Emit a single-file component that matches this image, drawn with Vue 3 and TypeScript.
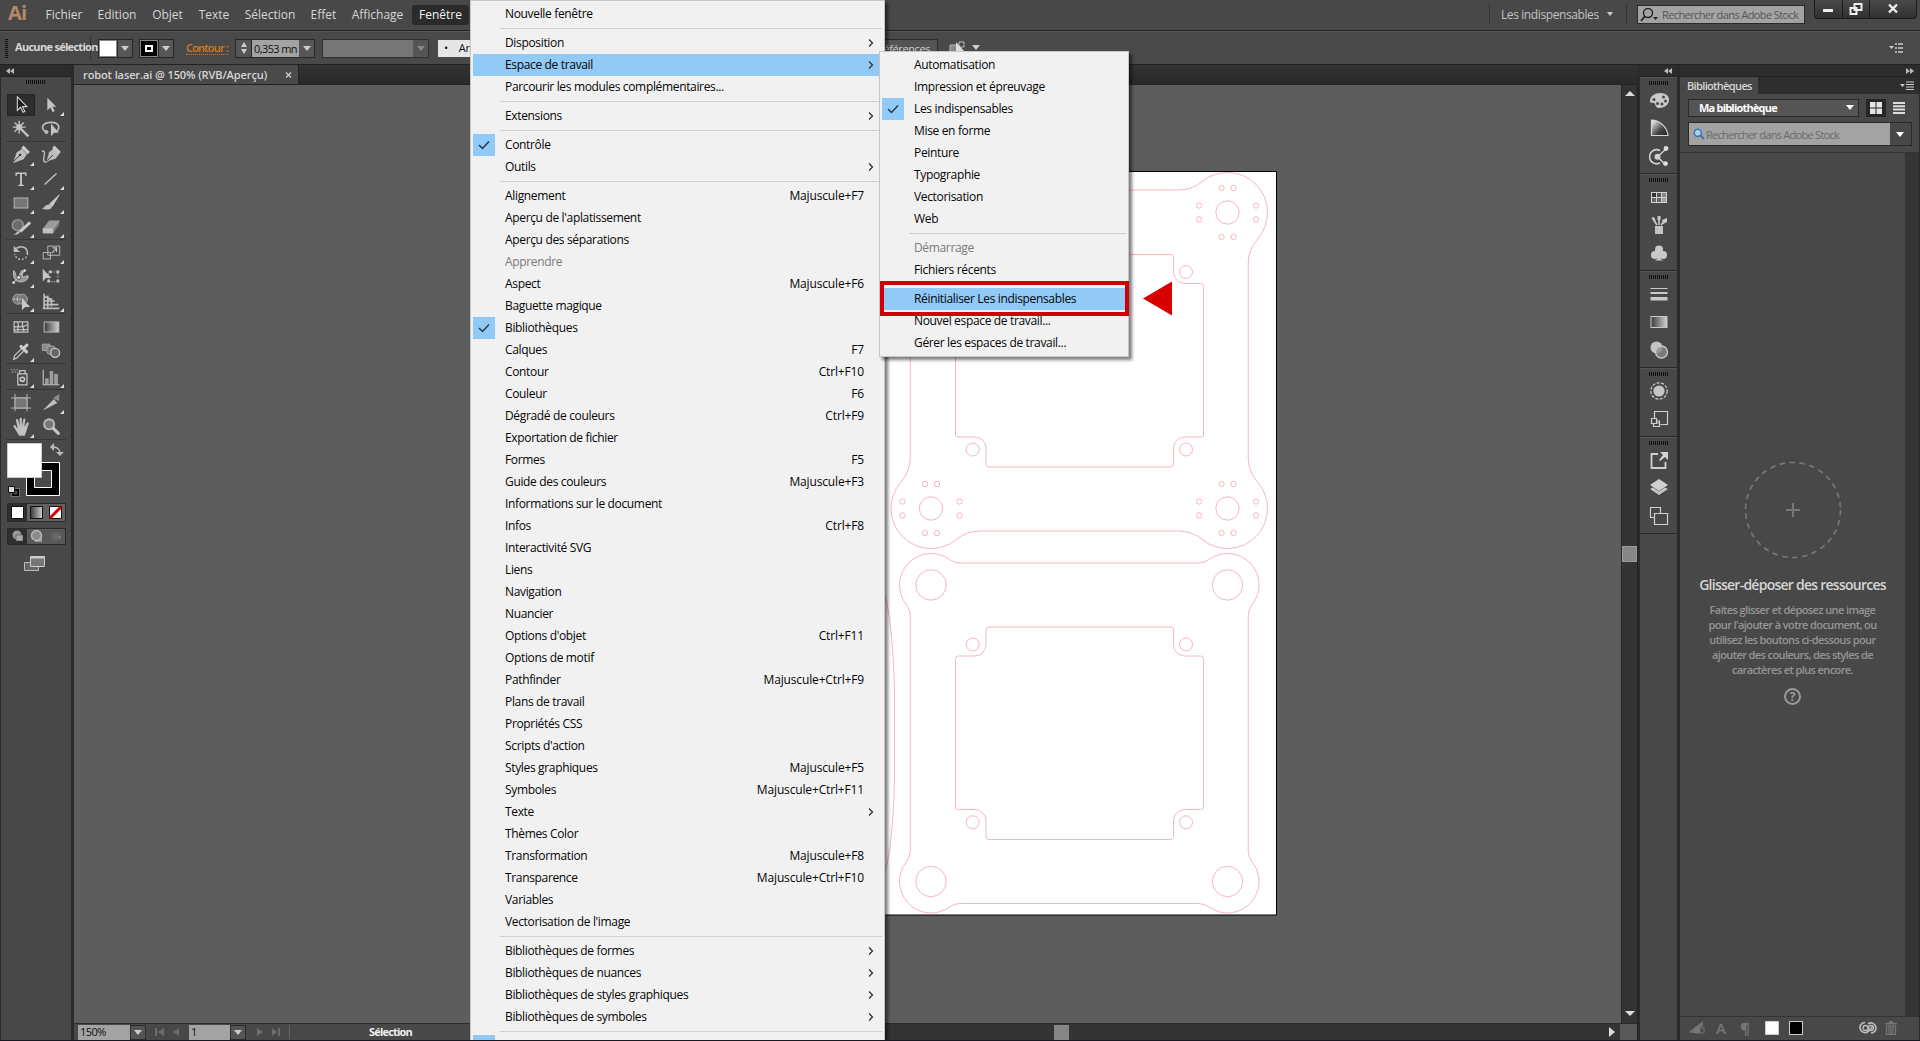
<script setup lang="ts">
interface MenuItem {
  label?: string
  key?: string
  sub?: boolean
  checked?: boolean
  active?: boolean
  disabled?: boolean
  sep?: boolean
}

const sep: MenuItem = { sep: true }
const item = (label: string, key = ''): MenuItem => ({ label, key })
const more = (label: string, active = false): MenuItem => ({ label, sub: true, active })

const menuBar = [
  { label: 'Fichier', w: 52 },
  { label: 'Edition', w: 54 },
  { label: 'Objet', w: 47 },
  { label: 'Texte', w: 46 },
  { label: 'Sélection', w: 66 },
  { label: 'Effet', w: 41 },
  { label: 'Affichage', w: 67 },
  { label: 'Fenêtre', w: 57, open: true },
]

const windowMenu: MenuItem[] = [
  item('Nouvelle fenêtre'), sep,
  more('Disposition'), more('Espace de travail', true), item('Parcourir les modules complémentaires...'), sep,
  more('Extensions'), sep,
  { label: 'Contrôle', checked: true }, more('Outils'), sep,
  item('Alignement', 'Majuscule+F7'),
  item("Aperçu de l'aplatissement"),
  item('Aperçu des séparations'),
  { label: 'Apprendre', disabled: true },
  item('Aspect', 'Majuscule+F6'),
  item('Baguette magique'),
  { label: 'Bibliothèques', checked: true },
  item('Calques', 'F7'),
  item('Contour', 'Ctrl+F10'),
  item('Couleur', 'F6'),
  item('Dégradé de couleurs', 'Ctrl+F9'),
  item('Exportation de fichier'),
  item('Formes', 'F5'),
  item('Guide des couleurs', 'Majuscule+F3'),
  item('Informations sur le document'),
  item('Infos', 'Ctrl+F8'),
  item('Interactivité SVG'),
  item('Liens'),
  item('Navigation'),
  item('Nuancier'),
  item("Options d'objet", 'Ctrl+F11'),
  item('Options de motif'),
  item('Pathfinder', 'Majuscule+Ctrl+F9'),
  item('Plans de travail'),
  item('Propriétés CSS'),
  item("Scripts d'action"),
  item('Styles graphiques', 'Majuscule+F5'),
  item('Symboles', 'Majuscule+Ctrl+F11'),
  more('Texte'),
  item('Thèmes Color'),
  item('Transformation', 'Majuscule+F8'),
  item('Transparence', 'Majuscule+Ctrl+F10'),
  item('Variables'),
  item("Vectorisation de l'image"), sep,
  more('Bibliothèques de formes'),
  more('Bibliothèques de nuances'),
  more('Bibliothèques de styles graphiques'),
  more('Bibliothèques de symboles'), sep,
  { label: '', checked: true },
]

const workspaceMenu: MenuItem[] = [
  item('Automatisation'),
  item('Impression et épreuvage'),
  { label: 'Les indispensables', checked: true },
  item('Mise en forme'),
  item('Peinture'),
  item('Typographie'),
  item('Vectorisation'),
  item('Web'), sep,
  { label: 'Démarrage', disabled: true },
  item('Fichiers récents'), sep,
  { label: 'Réinitialiser Les indispensables', active: true },
  item('Nouvel espace de travail...'),
  item('Gérer les espaces de travail...'),
]

// Toolbar glyphs, drawn on a 24 x 24 grid.
const g = 'fill="none" stroke="#bdbdbd"'
const tools: Record<string, string> = {
  select: '<path d="M8 3v15l3.600-3.500 2.600 5.500 2-1-2.500-5.200h4.800z" fill="#1d1d1d" stroke="#d0d0d0" stroke-width="1.200"/>',
  direct: '<path d="M8 4v14l3.300-3.200 2.600 5 2.300-1.200-2.600-4.800h4.200z" fill="#c4c4c4"/>',
  wand: '<path d="M12 12l8 8" stroke="#c4c4c4" stroke-width="2.600"/><path d="M10 3v14M3 10h14M5 5l10 10M15 5L5 15" stroke="#c4c4c4" stroke-width="1.500"/><circle cx="10" cy="10" r="3.200" fill="#c4c4c4"/>',
  lasso: '<path d="M9 15c-5 0-7-3-6-6 2-5 14-6 17-1 1 2.500 0 5-2 6.500M7 14c-3 1 0 4 1 2s-1-2-2-1" fill="none" stroke="#c0c0c0" stroke-width="1.800"/><path d="M12 6v14l3.500-4h5z" fill="#c4c4c4"/>',
  pen: '<path d="M3 20l4-11 6-4 6 6-4 6-11 4z" fill="#bdbdbd" stroke="#333" stroke-width=".6"/><path d="M3 20l7-7" stroke="#333"/><circle cx="11" cy="12" r="1.300" fill="#333"/><path d="M13.500 3l7 7" stroke="#c8c8c8" stroke-width="3.500"/>',
  curve: '<path d="M2 8c5-2 2 6 2 9 0 4 3 3 5 1" fill="none" stroke="#bdbdbd" stroke-width="1.500"/><path d="M7 19l3-10 5-4 6 6-4 5z" fill="#bdbdbd"/><path d="M7 19l7-7" stroke="#333"/><path d="M14.500 3l7 7" stroke="#c8c8c8" stroke-width="3.500"/>',
  text: '<path d="M6 5h12v4h-1l-1-2.500h-3V18l2 .5v1H9v-1l2-.5V6.500H8L7 9H6z" fill="#c6c6c6"/>',
  line: '<path d="M5 18L18 6" stroke="#c6c6c6" stroke-width="1.400"/>',
  rect: '<rect x="4.500" y="6.500" width="15" height="11" fill="#777" stroke="#bdbdbd"/>',
  brush: '<path d="M21 3L10.500 13l3 2.500z" fill="#c8c8c8" stroke="#c8c8c8"/><path d="M10 13.500c2 0 3.500 1.500 3 3-1 3-7 3-11 1.500 3-.5 3-4.500 8-4.500z" fill="#bdbdbd"/>',
  blob: '<circle cx="8.500" cy="10" r="6" fill="#6c6c6c" stroke="#999" stroke-width="1.500"/><path d="M11 17L22 7" stroke="#c8c8c8" stroke-width="3.200"/><path d="M3 20c5 0 4-5 8-3-1 3-4 4-8 3z" fill="#c4c4c4"/>',
  eraser: '<path d="M3 14l7-9h11l-7 9z" fill="#9a9a9a"/><path d="M3 14h11v5H3z" fill="#c0c0c0"/><path d="M14 14l7-9v5l-7 9z" fill="#777"/><path d="M3 14h11v5M14 14l7-9" fill="none" stroke="#ddd" stroke-width=".7"/>',
  rotate: `<path d="M7 7c5-4 12-1 12 5" ${g} stroke-width="1.700"/><path d="M4 4v7h7z" fill="#bdbdbd"/><path d="M19 12c0 5-4 7-7 7s-6-2-7-6" ${g} stroke-width="1.700" stroke-dasharray="2 2"/>`,
  scale: `<path d="M8.500 4.500h13v10h-13z" ${g}/><path d="M3.500 11.500h8v7h-8z" ${g}/><path d="M13 12l5-5M13.500 6.500H18V11" ${g} stroke-width="1.300"/>`,
  warp: '<path d="M4 5c3 2 1 6 4 7 3 0 3-8 6-7 1 4-2 5 0 7 3 0 3-2 6-1-1 6-6 7-11 6-3-1-6-4-5-12z" fill="#9a9a9a" stroke="#c4c4c4"/><path d="M4 18L16 5" stroke="#ccc"/><circle cx="9.500" cy="12.500" r="2" fill="#fff" stroke="#333"/><circle cx="4" cy="18" r="1.500" fill="#ddd"/><circle cx="16" cy="5" r="1.500" fill="#ddd"/>',
  transform: '<path d="M3 3v14l3.500-4h6z" fill="#c4c4c4"/><path d="M9 6.500h10.500V17H9z" fill="none" stroke="#c4c4c4" stroke-dasharray="1.500 1.500"/><path d="M18 5h3v3h-3zM18 15h3v3h-3zM8 15h3v3H8zM10 5h3v3h-3z" fill="#c4c4c4"/>',
  builder: '<circle cx="8.500" cy="10" r="5.500" fill="#777" stroke="#aaa"/><circle cx="13.500" cy="10" r="5.500" fill="#777" stroke="#aaa"/><path d="M4 10h12" stroke="#fff" stroke-dasharray="1.500 1.500"/><path d="M13 9v13l3.500-3.500H22z" fill="#c8c8c8"/>',
  perspective: '<path d="M4.500 4v16M8.500 6v14M12.500 9v9M3 20h18M5 16h15M5 12h11M5 7l7 3" fill="none" stroke="#bdbdbd" stroke-width="1.800"/>',
  mesh: '<path d="M4.500 6.500h15v11h-15zM4 13c4-4 7 2 16-4M4 16c5-3 10 1 16-2M8 7c4 4-2 6 1 11M14 7c-3 5 3 6 1 11" fill="none" stroke="#c4c4c4" stroke-width="1.300"/>',
  gradient: '<rect x="4.500" y="6.500" width="16" height="11" fill="url(#grad)" stroke="#c4c4c4"/>',
  dropper: '<path d="M4 21l1-4 8-8 2.500 2.500-8 8z" fill="none" stroke="#c4c4c4" stroke-width="1.300"/><path d="M12 7l6 6M15 9l3.500-3.500" stroke="#ccc" stroke-width="3.400" stroke-linecap="round"/>',
  blend: '<path d="M2.500 4.500h8v7h-8z" fill="#888" stroke="#aaa"/><rect x="7.500" y="6.500" width="9" height="9" rx="3" fill="#777" stroke="#aaa"/><circle cx="16.500" cy="14" r="4.900" fill="#666" stroke="#c4c4c4" stroke-width="1.500"/>',
  spray: '<path d="M8.500 8.500h10v12h-10zM10.500 8V5h6v3" fill="none" stroke="#c4c4c4" stroke-width="1.400"/><circle cx="13.500" cy="14.500" r="2.300" fill="none" stroke="#ccc" stroke-width="1.700"/><path d="M1 4h9M2 6.500h7" stroke="#bbb" stroke-dasharray="1.500 1.500"/>',
  graph: '<path d="M3.500 4v16.500H21" fill="none" stroke="#c4c4c4" stroke-width="1.200"/><path d="M6 14h3v6H6zM11 6h3v14h-3zM16 9h3v11h-3z" fill="#9a9a9a" stroke="#bbb" stroke-width=".6"/>',
  artboard: '<path d="M5.500 2v19M18.500 2v19M1 6.500h22M1 17.500h22" stroke="#bdbdbd"/><path d="M5.500 6.500h13v11h-13z" fill="#777" stroke="#bdbdbd"/>',
  slice: '<path d="M3 20L15 8l4 4c-5 2-8 5-16 8z" fill="#bdbdbd"/><path d="M14 7l7-5v8z" fill="#8a8a8a"/>',
  hand: '<path d="M3.500 11c1-2 2.500-1 3.500 1l1.500 1.500L6.500 5c0-2 2-2.500 2.600 0l1.400 6V3.500c0-2 2.300-2 2.500 0V11l1.500-7c.3-2 2.500-1.500 2.200.3L15.700 12l2.500-4.500c1-1.500 2.800-.5 2.200 1L17 19l-1 2.500h-6z" fill="#c0c0c0"/>',
  zoom: '<circle cx="10" cy="9" r="5.500" fill="#777" stroke="#bdbdbd" stroke-width="2"/><path d="M14.500 13.500l5.500 5.500" stroke="#c4c4c4" stroke-width="3.400" stroke-linecap="round"/>',
}

const toolGroups: string[][] = [
  ['select', 'direct', 'wand', 'lasso'],
  ['pen', 'curve', 'text', 'line', 'rect', 'brush', 'blob', 'eraser'],
  ['rotate', 'scale', 'warp', 'transform', 'builder', 'perspective'],
  ['mesh', 'gradient', 'dropper', 'blend'],
  ['spray', 'graph'],
  ['artboard', 'slice', 'hand', 'zoom'],
]
const noFlyout = ['select', 'wand', 'lasso', 'curve', 'transform', 'mesh', 'gradient', 'blend', 'artboard', 'zoom']

// Collapsed panel dock, 20 x 20 grid.
const d = 'fill="none" stroke="#cfcfcf"'
const docks: string[][] = [
  [
    '<path d="M1 11c0-5 5-8 10-8 6 0 9 3 9 7 0 5-5 8-10 8-4 0-3-4-5-5s-4 1-4-2z" fill="#c9c9c9"/><g fill="#484848"><circle cx="5" cy="9.500" r="1.500"/><circle cx="8.500" cy="13.500" r="1.500"/><circle cx="13" cy="14" r="1.500"/><circle cx="16.500" cy="11" r="1.500"/><circle cx="14.500" cy="7" r="1.500"/></g>',
    '<path d="M2.500 2v15.500H19C18 9 11 2 2.500 2z" fill="url(#fan)" stroke="#d5d5d5" stroke-width="1.200"/>',
    `<path d="M11 4.600A7 7 0 1 0 11 16.800" ${d} stroke-width="1.700"/><circle cx="8.500" cy="10.700" r="3" fill="#cfcfcf"/><path d="M8.500 10.700L17 3M8.500 10.700l8 8" stroke="#cfcfcf" stroke-width="1.500"/><circle cx="17" cy="2.500" r="2.400" fill="#ddd"/><circle cx="16.500" cy="17.600" r="2.400" fill="#ddd"/>`,
  ],
  [
    '<path d="M2 5h16v11H2z" fill="#d0d0d0"/><path d="M3 6h4v4H3z" fill="#333"/><path d="M8 6h4v4H8z" fill="#555"/><path d="M13 6h4v4h-4z" fill="#888"/><path d="M3 11h4v4H3zM8 11h4v4H8z" fill="#666"/><path d="M13 11h4v4h-4z" fill="#a0a0a0"/>',
    '<path d="M6 11h8v8H6z" fill="#c4c4c4"/><path d="M8 10L4 4M10 10V2M12 10l4-5" stroke="#ccc" stroke-width="1.600"/><path d="M2 3l3-1 2 4zM8.500 1h3v4h-3zM13 5l5-2v4l-4 2z" fill="#c9c9c9"/>',
    '<circle cx="10" cy="6.500" r="4" fill="#c9c9c9"/><circle cx="6" cy="12" r="4" fill="#c9c9c9"/><circle cx="14" cy="12" r="4" fill="#c9c9c9"/><path d="M9 9h2l.5 7 3 1.500h-9L8.500 16z" fill="#c9c9c9"/>',
  ],
  [
    '<path d="M1.500 4h17v1h-17zM1.500 8h17v2h-17zM1.500 13h17v3.500h-17z" fill="#c9c9c9"/>',
    '<rect x="2" y="4.500" width="16" height="11" fill="url(#grad)" stroke="#c9c9c9"/>',
    '<circle cx="7.500" cy="7.500" r="6" fill="#c4c4c4"/><circle cx="12.500" cy="12" r="6" fill="#8b8b8b" fill-opacity=".75" stroke="#c9c9c9" stroke-width="1.300"/>',
  ],
  [
    `<circle cx="10" cy="10" r="5.600" fill="#c4c4c4"/><circle cx="10" cy="10" r="8.200" ${d} stroke-width="1.200" stroke-dasharray="3 1.500"/>`,
    `<path d="M5.500 9V2.500h13v13h-7M2.500 9.500h5v5h-5zM8 14h3M4.500 15v2.500h6V12H8" ${d} stroke-width="1.200"/>`,
  ],
  [
    `<path d="M9 4H2.500v14h14v-6" ${d} stroke-width="1.800"/><path d="M11 2h8v8l-3-3-5 4-1-1 4-5z" fill="#d4d4d4"/>`,
    '<path d="M10 1l9 6-9 6-9-6z" fill="#d0d0d0"/><path d="M1 11l3-1.500 6 4 6-4 3 1.500-9 6z" fill="#c4c4c4"/>',
    `<path d="M5 11.500H1.500v-10h10V7" ${d} stroke-width="1.200"/><path d="M5.500 7.500h13v11h-13z" ${d} stroke-width="1.200"/>`,
  ],
]

// Outline of a plate: four round lobes joined by straight edges through tangent fillets.
function plate(x1: number, x2: number, y1: number, y2: number, r: number, ox: number, oy: number, f: number): string {
  const dx = Math.sqrt((r + f) ** 2 - (f + oy) ** 2)
  const dy = Math.sqrt((r + f) ** 2 - (f + ox) ** 2)
  const k = r / (r + f)
  const hx = dx * k
  const hy = (f + oy) * k
  const vx = (f + ox) * k
  const vy = dy * k
  const n = (v: number) => v.toFixed(2)
  const fillet = (x: number, y: number) => `A${f} ${f} 0 0 0 ${n(x)} ${n(y)}`
  const lobe = (x: number, y: number) => `A${r} ${r} 0 0 1 ${n(x)} ${n(y)}`
  return [
    `M${n(x1 + dx)} ${n(y1 - oy)}H${n(x2 - dx)}`,
    fillet(x2 - hx, y1 - hy), lobe(x2 + vx, y1 + vy), fillet(x2 + ox, y1 + dy), `V${n(y2 - dy)}`,
    fillet(x2 + vx, y2 - vy), lobe(x2 - hx, y2 + hy), fillet(x2 - dx, y2 + oy), `H${n(x1 + dx)}`,
    fillet(x1 + hx, y2 + hy), lobe(x1 - vx, y2 - vy), fillet(x1 - ox, y2 - dy), `V${n(y1 + dy)}`,
    fillet(x1 - vx, y1 + vy), lobe(x1 + hx, y1 - hy), fillet(x1 + dx, y1 - oy), 'Z',
  ].join('')
}

// Cut-out window with notched corners; t = top edge.
function cutout(t: number): string {
  const b = t + 212.5
  return `M989 ${t}H1170.500q3 0 3 3V${t + 18}q1 10 11 11H1200.500q3 0 3 3V${b - 32}q0 2-3 2H1184.500q-10 1-11 11V${b - 3}q0 3-3 3H989q-3 0-3-3V${b - 19}q-1-10-11-11H958.500q-3 0-3-2V${t + 32}q0-3 3-3H975q10-1 11-11V${t + 3}q0-3 3-3Z`
}

const lobesX = [931, 1227.5]
const smallHoles = [
  [-6, -24.5], [6, -24.5], [-6, 24.5], [6, 24.5],
  [-28.5, -7], [-28.5, 7], [28.5, -7], [28.5, 7],
]
</script>

<template>
  <div class="app">
    <svg class="defs" width="0" height="0">
      <linearGradient id="grad"><stop offset="0" stop-color="#3a3a3a" /><stop offset="1" stop-color="#d0d0d0" /></linearGradient>
      <linearGradient id="fan" x2="1" y2="1"><stop offset="0" stop-color="#fff" /><stop offset=".6" stop-color="#444" /><stop offset="1" stop-color="#222" /></linearGradient>
    </svg>

    <header class="menubar">
      <span class="brand">Ai</span>
      <nav>
        <span v-for="m in menuBar" :key="m.label" class="mi" :class="{ open: m.open }" :style="{ width: m.w + 'px' }">{{ m.label }}</span>
      </nav>
      <div class="right">
        <div class="workspace"><span>Les indispensables</span><i class="tri" /></div>
        <div class="stock">
          <svg width="20" height="16" viewBox="0 0 20 16"><circle cx="9" cy="6" r="4.500" fill="none" stroke="#222" stroke-width="1.400" /><path d="M6 9l-4 5" stroke="#222" stroke-width="1.800" /><path d="M14 10h5l-2.500 3z" fill="#222" /></svg>
          <span>Rechercher dans Adobe Stock</span>
        </div>
        <div class="winbtns">
          <span><svg width="12" height="12"><path d="M1 6h10v3H1z" fill="#eee" /></svg></span>
          <span><svg width="14" height="14"><path d="M5.500 2h7v6h-7z M1.500 6h6v6h-6z" fill="#333" stroke="#eee" stroke-width="2" /></svg></span>
          <span class="close"><svg width="12" height="12"><path d="M2 1.500l8 8M10 1.500l-8 8" stroke="#eee" stroke-width="2.400" /></svg></span>
        </div>
      </div>
    </header>

    <div class="control">
      <i class="vgrip" />
      <b class="nosel">Aucune sélection</b>
      <div class="swatch"><i class="white" /><em><i class="tri" /></em></div>
      <div class="swatch stroke"><i class="ring"><i /></i><em><i class="tri" /></em></div>
      <span class="contour">Contour :</span>
      <div class="weight">
        <span class="spin"><i class="tri up" /><i class="tri" /></span>
        <span class="val">0,353 mn</span><em><i class="tri" /></em>
      </div>
      <div class="profile"><span /><em><i class="tri" /></em></div>
      <div class="shape">•<span>Arrondi</span></div>
      <div class="prefs">Préférences</div>
      <svg class="simil" width="32" height="18"><path d="M1 6h7v7H1z" fill="#888" stroke="#bbb" /><path d="M10 3h5v5h-5z" fill="none" stroke="#bbb" /><path d="M7 3v12l3-3h5z" fill="#ddd" /><path d="M23 6h8l-4 5z" fill="#ccc" /></svg>
      <svg class="opts" width="16" height="12"><path d="M0 4h5L2.500 7z" fill="#ccc" /><path d="M6 2h2M6 6h2M6 10h2M9 2h5M9 6h5M9 10h5" stroke="#ccc" stroke-width="1.500" /></svg>
    </div>

    <main>
      <aside class="toolbar">
        <div class="collapse"><svg width="8" height="6"><path d="M4 0v6L0 3zM8 0v6L4 3z" fill="#bbb" /></svg></div>
        <i class="grip" />
        <div v-for="(grp, i) in toolGroups" :key="i" class="tgroup">
          <div v-for="t in grp" :key="t" class="tool" :class="{ on: t === 'select', fly: !noFlyout.includes(t) }">
            <svg width="22" height="22" viewBox="0 0 24 24" v-html="tools[t]" />
          </div>
        </div>
        <svg class="fillstroke" width="64" height="56" viewBox="0 0 64 56">
          <path d="M20.500 20.500h33v33h-33z" fill="#000" stroke="#fff" /><path d="M28.500 28.500h17v17h-17z" fill="#4a4a4a" stroke="#fff" />
          <path d="M1.500 1.500h34v34h-34z" fill="#fff" stroke="#ccc" />
          <path d="M47 5c5 0 7 2 7 7" fill="none" stroke="#bbb" stroke-width="1.300" /><path d="M48 1v8l-4-4zM50 10h8l-4 4z" fill="#bbb" />
          <path d="M6.500 47.500h6v6h-6z" fill="none" stroke="#000" stroke-width="2" /><path d="M5.500 46.500h8v8h-8z" fill="none" stroke="#aaa" stroke-width=".6" /><path d="M2.500 44.500h6v6h-6z" fill="#ddd" stroke="#111" />
        </svg>
        <svg class="modes" width="60" height="44" viewBox="0 0 60 44">
          <path d="M.5.500h58v18H.5z" fill="#626262" stroke="#2b2b2b" /><path d="M1 1h19v17H1z" fill="#2e2e2e" />
          <path d="M4.500 3.500h12v12h-12z" fill="#fff" stroke="#111" /><path d="M23.500 3.500h12v12h-12z" fill="url(#grad)" stroke="#111" /><path d="M42.500 3.500h12v12h-12z" fill="#fff" stroke="#111" /><path d="M43 15L54 4" stroke="#d50000" stroke-width="3" />
          <path d="M.5 25.500h58v16H.5z" fill="#585858" stroke="#2b2b2b" /><path d="M1 26h19v15H1z" fill="#2e2e2e" />
          <circle cx="10" cy="32" r="4.500" fill="#999" /><path d="M9 32h7v6H9z" fill="#aaa" stroke="#333" stroke-width=".5" />
          <path d="M28 33h7v6h-7z" fill="#999" /><circle cx="29.500" cy="32.500" r="5" fill="#8a8a8a" stroke="#bbb" stroke-width="1.300" />
          <circle cx="49" cy="33.500" r="4.500" fill="#666" /><path d="M49 33h5v4z" fill="#777" />
        </svg>
        <svg class="screens" width="22" height="17"><path d="M.5 7.500h14v8H.5z" fill="#666" stroke="#bbb" /><path d="M6.500 1.500h14v10h-14z" fill="#777" stroke="#ccc" /><path d="M7 2h13v1.500H7z" fill="#ccc" /></svg>
      </aside>

      <section class="document">
        <div class="tabs"><div class="tab"><span>robot laser.ai @ 150% (RVB/Aperçu)</span><svg width="7" height="8"><path d="M1 1.500l5 5M6 1.500l-5 5" stroke="#ccc" stroke-width="1.400" /></svg></div></div>
        <div class="viewport">
          <div class="stage">
            <svg class="canvas" width="1547" height="938" viewBox="74 85 1547 938">
              <path d="M800 171.500h476.500v743.500H800z" fill="#fff" stroke="#000" />
              <g fill="none" stroke="#f3b9bd">
                <path :d="plate(931, 1227.5, 212.5, 508.5, 40, 20.7, 22.5, 38)" />
                <path :d="plate(931, 1227.5, 585, 881.5, 31.5, 20.7, 22, 18)" />
                <path :d="cutout(254.5)" />
                <path :d="cutout(627)" />
                <template v-for="x in lobesX" :key="x">
                  <circle v-for="y in [585, 881.5]" :key="y" :cx="x" :cy="y" r="15.200" />
                  <template v-for="y in [212.5, 508.5]" :key="'h' + y">
                    <circle :cx="x" :cy="y" r="11.700" />
                    <circle v-for="(h, i) in smallHoles" :key="i" :cx="x + h[0]" :cy="y + h[1]" r="2.700" />
                  </template>
                </template>
                <template v-for="x in [972.7, 1186]" :key="'s' + x">
                  <circle v-for="y in [272, 449.500, 644.500, 822.300]" :key="y" :cx="x" :cy="y" r="6.500" />
                </template>
                <path d="M884 594C890 606 894.500 660 894.500 700V770C894.500 812 890 862 884 873" />
              </g>
              <path d="M1143 298.500l29-17v34z" fill="#d90000" />
            </svg>
            <div class="vscroll"><i class="tri up big" /><i class="thumb" /><i class="tri big" /></div>
          </div>
          <div class="status">
            <span class="field zoomf">150%</span><em><i class="tri" /></em>
            <svg width="43" height="12"><path d="M9 2h2v8H9zM18 2v8l-6-4zM33 2v8l-6-4z" fill="#6c6c6c" /></svg>
            <span class="field page">1</span><em><i class="tri" /></em>
            <svg width="43" height="12"><path d="M11 2v8l6-4zM26 2v8l5-4zM32 2h2v8h-2z" fill="#6c6c6c" /></svg>
            <b class="mode">Sélection</b>
            <div class="hscroll"><i class="hthumb" /><i class="arrow" /></div>
            <i class="corner" />
          </div>
        </div>
      </section>

      <aside class="dock">
        <div class="collapse end"><svg width="8" height="6"><path d="M4 0v6L0 3zM8 0v6L4 3z" fill="#bbb" /></svg></div>
        <div v-for="(grp, i) in docks" :key="i" class="dgroup">
          <i class="grip" />
          <span v-for="(ic, j) in grp" :key="j"><svg width="20" height="20" viewBox="0 0 20 20" v-html="ic" /></span>
        </div>
      </aside>

      <aside class="libs">
        <div class="collapse end"><svg width="8" height="6"><path d="M0 0v6l4-3zM4 0v6l4-3z" fill="#bbb" /></svg></div>
        <div class="ltabs"><b>Bibliothèques</b><svg width="16" height="12"><path d="M1 4h5L3.500 7z" fill="#ccc" /><path d="M7 2h8M7 4.500h8M7 7h8M7 9.500h8" stroke="#ccc" /></svg></div>
        <div class="lrow">
          <div class="combo"><b>Ma bibliothèque</b><i class="tri lt" /></div>
          <span class="view on"><svg width="12" height="12"><path d="M0 0h5.500v5.500H0zM6.500 0H12v5.500H6.500zM0 6.500h5.500V12H0zM6.500 6.500H12V12H6.500z" fill="#e4e4e4" /></svg></span>
          <span class="view"><svg width="12" height="12"><path d="M0 0h12v2H0zM0 3.300h12v2H0zM0 6.600h12v2H0zM0 9.900h12v2H0z" fill="#ddd" /></svg></span>
        </div>
        <div class="lsearch">
          <div><svg width="12" height="12"><circle cx="4.800" cy="4.800" r="3.600" fill="#b7cbe0" stroke="#3d77b8" stroke-width="1.600" /><path d="M7.500 7.500l3.500 3.500" stroke="#3d77b8" stroke-width="2" /></svg><span>Rechercher dans Adobe Stock</span></div>
          <i class="tri lt" />
        </div>
        <div class="lbody">
          <div class="drop">
            <svg width="98" height="98"><circle cx="49" cy="49" r="47.500" fill="none" stroke="#777" stroke-width="1.700" stroke-dasharray="5.500 4.500" /><path d="M42 49h14M49 42v14" stroke="#777" stroke-width="2" /></svg>
            <h3>Glisser-déposer des ressources</h3>
            <p>Faites glisser et déposez une image<br>pour l'ajouter à votre document, ou<br>utilisez les boutons ci-dessous pour<br>ajouter des couleurs, des styles de<br>caractères et plus encore.</p>
            <span class="help">?</span>
          </div>
          <i class="track" />
        </div>
        <div class="lfoot">
          <svg width="18" height="14"><path d="M1 11h6L13 2v4M1 11l12-9" fill="none" stroke="#777" stroke-width="1.500" /><circle cx="8" cy="9" r="3.500" fill="#777" /><path d="M9 7h6v5H9z" fill="none" stroke="#777" /></svg>
          <span class="ga">A</span><span class="gp">¶</span>
          <i class="sq w" /><i class="sq k" />
          <svg class="cc" width="18" height="14"><path d="M6 1.500a5 5 0 1 0 3 9l5-5M12 12a5 5 0 1 0-3-9" fill="none" stroke="#bbb" stroke-width="1.700" /><circle cx="6.500" cy="7" r="2.500" fill="none" stroke="#bbb" stroke-width="1.300" /><circle cx="12" cy="7" r="2.500" fill="none" stroke="#bbb" stroke-width="1.300" /></svg>
          <svg width="12" height="14"><path d="M0 2h12v1.500H0zM4 0h4v2H4z" fill="#777" /><path d="M1.500 5h9v8.500h-9zM4 5v8M6 5v8M8 5v8" fill="none" stroke="#777" stroke-width="1.200" /></svg>
        </div>
      </aside>
    </main>

    <div class="menu window">
      <template v-for="(m, i) in windowMenu" :key="i">
        <div v-if="m.sep" class="sep" />
        <div v-else class="row" :class="{ active: m.active, off: m.disabled }">
          <span class="chk" :class="{ yes: m.checked }"><svg v-if="m.checked" width="12" height="10"><path d="M1 5l3.500 3.500L11 1.500" fill="none" stroke="#26394a" stroke-width="1.500" /></svg></span>
          <span class="lbl">{{ m.label }}</span><span class="key">{{ m.key }}</span>
          <svg v-if="m.sub" class="chev" width="6" height="8"><path d="M1 .5L4.500 4 1 7.500" fill="none" stroke="#333" stroke-width="1.300" /></svg>
        </div>
      </template>
    </div>

    <div class="menu spaces">
      <template v-for="(m, i) in workspaceMenu" :key="i">
        <div v-if="m.sep" class="sep" />
        <div v-else class="row" :class="{ active: m.active, off: m.disabled }">
          <span class="chk" :class="{ yes: m.checked }"><svg v-if="m.checked" width="12" height="10"><path d="M1 5l3.500 3.500L11 1.500" fill="none" stroke="#26394a" stroke-width="1.500" /></svg></span>
          <span class="lbl">{{ m.label }}</span>
        </div>
      </template>
      <div class="callout" />
    </div>
  </div>
</template>

<style>
body { margin: 0; overflow: hidden; background: #484848; }
</style>

<style scoped>
* { box-sizing: border-box; }
.app { position: relative; width: 1920px; height: 1041px; overflow: hidden; display: flex; flex-direction: column; background: #484848; color: #d6d6d6; font: 12px "Open Sans", "Noto Sans", sans-serif; white-space: nowrap; border-bottom: 1px solid #17171f; }
.defs { position: absolute; }
svg { display: block; flex: none; }
i, em { display: block; flex: none; font-style: normal; }
.tri { width: 0; height: 0; border: 4px solid transparent; border-top: 5px solid #ccc; border-bottom: 0; }
.tri.up { border-top: 0; border-bottom: 5px solid #ccc; }
.tri.lt { border-top-color: #fff; }
.tri.big { border-left-width: 5px; border-right-width: 5px; border-top-color: #ddd; border-bottom-color: #ddd; }
em { display: flex; align-items: center; justify-content: center; }

.menubar { height: 31px; flex: none; display: flex; align-items: flex-start; background: #484848; border-bottom: 1px solid #242424; }
.brand { width: 38px; padding-left: 8px; font: 700 20px/26px "Open Sans", sans-serif; color: #b98766; letter-spacing: -0.9px; }
nav { display: flex; padding-top: 5px; }
.mi { height: 20px; line-height: 19px; text-align: center; }
.open { background: #2b2b2b; color: #f2f2f2; border-radius: 3px; margin-left: 1px; }
.right { margin-left: auto; display: flex; padding-right: 3px; }
.workspace { width: 138px; height: 20px; margin-top: 4px; display: flex; align-items: center; padding: 0 13px 0 11px; justify-content: space-between; border-left: 1px solid #333; border-right: 1px solid #333; color: #c2c2c2; letter-spacing: -.4px; }
.workspace .tri { border-width: 4px 3px 0; }
.stock { width: 168px; height: 19px; margin: 5px 9px 0 10px; background: #a3a3a3; border: 1px solid #2a2a2a; display: flex; align-items: center; padding-left: 1px; color: #565656; font-size: 11px; letter-spacing: -.6px; }
.stock span { margin-left: 3px; }
.winbtns { display: flex; width: 103px; height: 19px; border: 1px solid #1c1c1c; border-top: 0; border-radius: 0 0 4px 4px; background: linear-gradient(#4a4a4a, #303030); }
.winbtns span { width: 28px; display: flex; align-items: center; justify-content: center; border-right: 1px solid #1c1c1c; }
.winbtns .close { width: 46px; border: 0; }

.control { height: 34px; flex: none; display: flex; align-items: center; background: #494949; border-top: 1px solid #595959; border-bottom: 1px solid #222; font-size: 11px; padding-left: 5px; }
.vgrip { width: 3px; height: 19px; background: repeating-linear-gradient(#111 0 1px, #494949 1px 2px); }
.nosel { width: 76px; height: 24px; line-height: 22px; margin: 0 7px 0 7px; letter-spacing: -.7px; border-right: 1px solid #333; }
.swatch { display: flex; height: 19px; width: 35px; border: 1px solid #272727; margin-right: 6px; }
.white { width: 18px; background: #fff; border: 1px solid #888; }
.swatch em { flex: 1; background: #565656; border-left: 1px solid #272727; }
.ring { width: 18px; height: 17px; background: #000; border: 1px solid #888; padding: 4px; }
.ring i { width: 8px; height: 7px; border: 2px solid #fff; background: #000; }
.contour { margin: 1px 7px 0 6px; width: 42px; line-height: 12px; font-weight: 600; color: #d07d24; letter-spacing: -.8px; border-bottom: 1px dotted #d07d24; }
.weight { display: flex; width: 80px; height: 19px; border: 1px solid #272727; }
.spin { width: 16px; display: flex; flex-direction: column; align-items: center; justify-content: space-evenly; background: #555; border-right: 1px solid #272727; }
.spin .tri { border-left-width: 3px; border-right-width: 3px; }
.val { width: 47px; background: #a3a3a3; color: #111; line-height: 17px; padding-left: 2px; letter-spacing: -.6px; }
.weight em { flex: 1; background: #565656; }
.profile { display: flex; width: 107px; height: 19px; margin: 0 9px 0 7px; border: 1px solid #2f2f2f; background: #767676; }
.profile span { flex: 1; }
.profile em { width: 15px; background: #555; }
.profile .tri { border-top-color: #888; }
.shape { width: 120px; height: 17px; line-height: 16px; background: #e6e6e6; color: #111; padding-left: 6px; display: flex; letter-spacing: -.3px; }
.shape span { margin-left: 11px; }
.prefs { width: 90px; height: 19px; line-height: 17px; margin-left: 290px; background: #545454; border: 1px solid #2c2c2c; color: #ccc; text-align: right; padding-right: 7px; letter-spacing: -.4px; }
.simil { margin-left: 11px; }
.opts { margin-left: auto; margin-right: 15px; }

main { flex: 1; display: flex; min-height: 0; }
.collapse { height: 12px; flex: none; display: flex; align-items: center; background: #2c2c2c; padding-left: 5px; border-bottom: 1px solid #222; }
.collapse.end { justify-content: flex-end; padding-right: 5px; }
.grip { width: 19px; height: 4px; background: repeating-linear-gradient(90deg, #111 0 1px, #484848 1px 2px); }
.toolbar { width: 74px; flex: none; display: flex; flex-direction: column; border-left: 1px solid #2a2a2a; border-right: 3px solid #2a2a2a; background: #484848; }
.toolbar > .grip { margin: 3px 0 9px 25px; }
.tgroup { display: grid; grid-template-columns: 30px 30px; grid-auto-rows: 24px; margin-left: 5px; width: 60px; border-bottom: 1px solid #363636; padding-bottom: 0; margin-bottom: 1px; }
.tool { position: relative; display: flex; align-items: center; justify-content: center; }
.tool.on { background: #2d2d2d; margin: 1px; border: 1px solid #252525; }
.fly::after { content: ""; position: absolute; right: 2px; bottom: 1px; border: 2px solid; border-color: transparent #ddd #ddd transparent; }
.fillstroke { margin: 1px 0 0 5px; }
.modes { margin: 5px 0 0 6px; }
.screens { margin: 8px 0 0 23px; }

.document { width: 1564px; flex: none; display: flex; flex-direction: column; }
.tabs { height: 20px; background: linear-gradient(#333, #292929); display: flex; border-bottom: 1px solid #222; }
.tab { width: 225px; background: #4a4a4a; display: flex; align-items: center; padding-left: 9px; font-size: 11px; border-right: 1px solid #222; font-weight: 600; letter-spacing: -.1px; }
.tab span { width: 187px; margin-right: 15px; }
.viewport { flex: 1; display: flex; flex-direction: column; width: 1564px; border-right: 1px solid #222; }
.stage { height: 938px; display: flex; background: #5d5d5d; }
.vscroll { width: 16px; background: #343434; border-left: 1px solid #292929; display: flex; flex-direction: column; align-items: center; padding: 6px 0 7px; justify-content: space-between; }
.thumb { width: 15px; height: 16px; background: #868686; margin-top: 1px; border: 1px solid #999; }
.status { height: 17px; display: flex; align-items: center; background: #484848; border-top: 1px solid #2b2b2b; padding-left: 4px; color: #eee; font-size: 11px; }
.field { height: 15px; line-height: 14px; background: #a3a3a3; color: #111; padding-left: 2px; letter-spacing: -.5px; }
.zoomf { width: 52px; }
.page { width: 41px; }
.status em { width: 16px; height: 15px; background: #555; border: 1px solid #2b2b2b; }
.mode { width: 578px; padding-left: 79px; border-left: 1px solid #666; letter-spacing: -.8px; line-height: 14px; }
.hscroll { flex: 1; align-self: stretch; background: #343434; display: flex; align-items: center; justify-content: space-between; padding: 0 5px 0 187px; }
.hthumb { width: 15px; height: 15px; background: #868686; }
.arrow { border: 5px solid transparent; border-left: 6px solid #ddd; border-right: 0; }
.corner { width: 17px; height: 16px; background: #585858; }

.dock { width: 39px; flex: none; border-left: 2px solid #2b2b2b; display: flex; flex-direction: column; }
.dgroup { padding: 3px 0 3px 9px; border-bottom: 1px solid #2a2a2a; border-top: 1px solid #555; display: flex; flex-direction: column; }
.dgroup span { height: 28px; display: flex; align-items: center; }
.dgroup .grip { margin-bottom: 1px; }

.libs { flex: 1; display: flex; flex-direction: column; border-left: 3px solid #2a2a2a; border-right: 1px solid #2a2a2a; min-width: 0; }
.ltabs { height: 17px; flex: none; background: #2e2e2e; display: flex; align-items: center; justify-content: space-between; padding-right: 4px; }
.ltabs b { width: 78px; height: 17px; line-height: 17px; padding-left: 7px; background: #484848; font-size: 11px; font-weight: 600; letter-spacing: -.65px; }
.lrow { display: flex; align-items: center; height: 27px; padding: 1px 0 0 8px; }
.combo { width: 171px; height: 18px; border: 1px solid #2a2a2a; background: #555; display: flex; align-items: center; justify-content: space-between; padding: 0 4px 1px 10px; color: #fff; font-size: 11px; letter-spacing: -.8px; }
.view { width: 20px; height: 18px; margin-left: 7px; display: flex; align-items: center; justify-content: center; }
.view + .view { margin-left: 3px; }
.view.on { background: #262626; }
.lsearch { height: 24px; flex: none; width: 224px; margin: 1px 0 6px 8px; border: 1px solid #2a2a2a; display: flex; align-items: center; }
.lsearch div { width: 201px; height: 22px; background: #a3a3a3; display: flex; align-items: center; padding-left: 4px; color: #6a6a6a; font-size: 11px; letter-spacing: -.72px; }
.lsearch span { margin-left: 1px; }
.lsearch .tri { margin-left: 6px; }
.lbody { flex: 1; display: flex; border-top: 1px solid #333; }
.drop { flex: 1; display: flex; flex-direction: column; align-items: center; padding-top: 308px; }
.drop h3 { margin: 16px 0 7px; font: 600 14px/20px "Open Sans", sans-serif; letter-spacing: -.75px; color: #d4d4d4; }
.drop p { margin: 0 0 11px; text-align: center; font-weight: 600; font-size: 11px; line-height: 15px; letter-spacing: -.6px; color: #959595; }
.help { width: 17px; height: 17px; border: 2px solid #999; border-radius: 50%; font-weight: 700; line-height: 13px; text-align: center; color: #999; }
.track { width: 14px; background: #353535; }
.lfoot { height: 24px; flex: none; border-top: 1px solid #333; display: flex; align-items: center; padding: 0 0 2px 9px; color: #777; }
.ga { font-size: 15px; font-weight: 600; margin-left: 9px; width: 24px; }
.gp { font-size: 15px; font-weight: 700; width: 25px; }
.sq { width: 14px; height: 14px; border: 1px solid #ccc; margin-right: 10px; }
.w { background: #fff; }
.k { background: #000; margin-right: 56px; }
.cc { margin-right: 8px; }

.menu { position: absolute; background: #f1f1f1; color: #050505; border: 1px solid #c6c6c6; padding: 2px; box-shadow: 3px 3px 3px rgba(0, 0, 0, .5); }
.window { left: 470px; top: 0; width: 415px; height: 1060px; }
.spaces { left: 879px; top: 51px; width: 250px; height: 306px; }
.row { height: 22px; display: flex; align-items: center; }
.chk { width: 22px; height: 22px; margin-right: 10px; display: flex; align-items: center; justify-content: center; }
.yes, .active { background: #91c9f7; }
.lbl { flex: 1; letter-spacing: -.34px; padding-bottom: 2px; }
.key { margin-right: 18px; letter-spacing: -.15px; padding-bottom: 2px; }
.row:has(.chev) .key { margin-right: 0; }
.chev { margin: 0 8px 1px 0; }
.off { color: #7b7b7b; }
.sep { height: 7px; padding: 3px 0; margin: 0 0 0 27px; background: #cfcfcf content-box; background-clip: content-box; }
.callout { position: absolute; left: 0; top: 229px; width: 249px; height: 35px; border: 4px solid #d00004; }
</style>
